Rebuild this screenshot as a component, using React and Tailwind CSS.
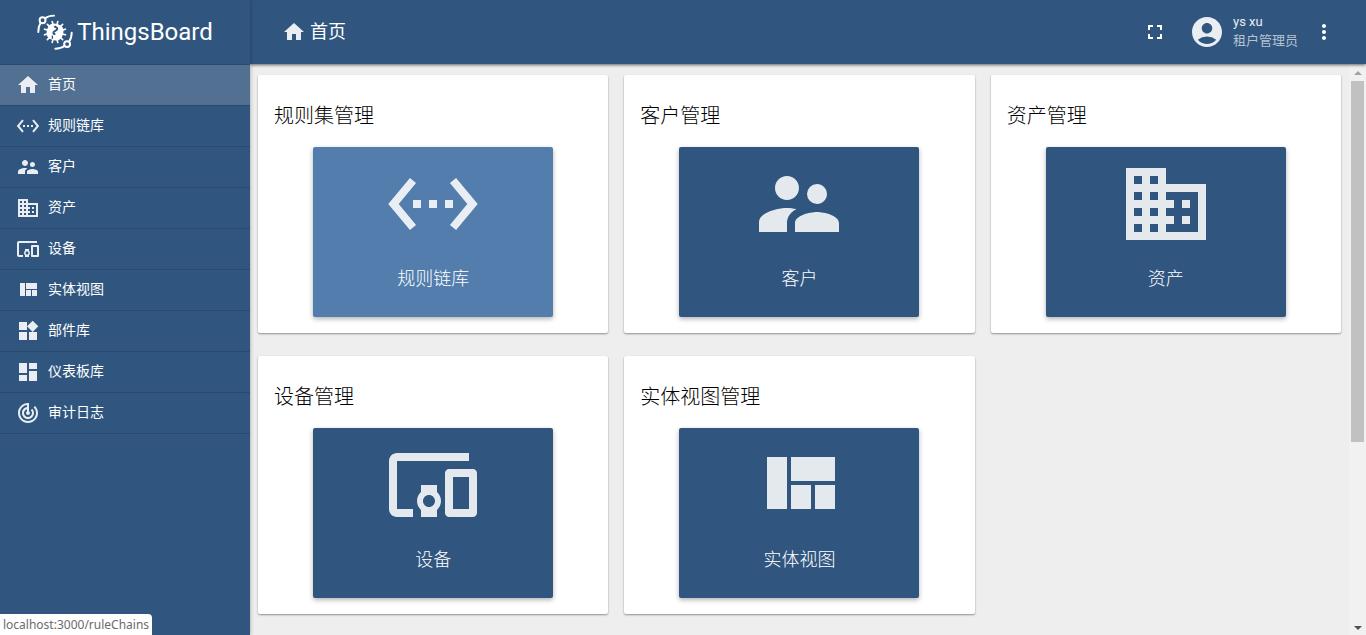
import React, { useState } from 'react';
import {
  MdAccountCircle,
  MdDashboard,
  MdDevicesOther,
  MdDomain,
  MdFullscreen,
  MdHome,
  MdMoreVert,
  MdSettingsEthernet,
  MdSupervisorAccount,
  MdTrackChanges,
  MdWidgets,
} from 'react-icons/md';

const ViewQuiltIcon = ({ className }) => (
  <svg viewBox="0 0 24 24" fill="currentColor" className={className} aria-hidden="true">
    <path d="M10 18h5v-6h-5v6zm-6 0h5V5H4v13zm12 0h5v-6h-5v6zM10 5v6h11V5H10z" />
  </svg>
);

const menuItems = [
  { label: '首页', path: '/home', icon: MdHome },
  { label: '规则链库', path: '/ruleChains', icon: MdSettingsEthernet },
  { label: '客户', path: '/customers', icon: MdSupervisorAccount },
  { label: '资产', path: '/assets', icon: MdDomain },
  { label: '设备', path: '/devices', icon: MdDevicesOther },
  { label: '实体视图', path: '/entityViews', icon: ViewQuiltIcon },
  { label: '部件库', path: '/widgets-bundles', icon: MdWidgets },
  { label: '仪表板库', path: '/dashboards', icon: MdDashboard },
  { label: '审计日志', path: '/auditLogs', icon: MdTrackChanges },
];

const sections = [
  { title: '规则集管理', label: '规则链库', path: '/ruleChains', icon: MdSettingsEthernet },
  { title: '客户管理', label: '客户', path: '/customers', icon: MdSupervisorAccount },
  { title: '资产管理', label: '资产', path: '/assets', icon: MdDomain },
  { title: '设备管理', label: '设备', path: '/devices', icon: MdDevicesOther },
  { title: '实体视图管理', label: '实体视图', path: '/entityViews', icon: ViewQuiltIcon },
];

const teeth = [0, 30, 60, 90, 120, 150, 180, 210, 240, 270, 300, 330];

const Logo = () => (
  <a href="#/home" className="flex items-center justify-center h-16 gap-1 text-white">
    <svg viewBox="0 0 110 110" className="w-9 h-9 shrink-0" fill="none" stroke="currentColor" aria-hidden="true">
      <g strokeWidth="6" strokeLinecap="round">
        <circle cx="17" cy="19" r="9" />
        <path d="M25 13C33 7 42 5 52 5" />
        <path d="M11 27C6 35 4 44 4 55" />
        <circle cx="92" cy="92" r="9" />
        <path d="M98 84c6-8 8-17 8-27" />
        <path d="M84 98c-8 6-17 8-28 8" />
      </g>
      {teeth.map((angle) => (
        <path key={angle} d="M55 33V22" strokeWidth="5" strokeLinecap="round" transform={`rotate(${angle + 15} 55 55)`} />
      ))}
      <rect x="30" y="30" width="50" height="50" rx="20" fill="currentColor" stroke="none" transform="rotate(15 55 55)" />
      <path
        d="M53 37c3 4 10 3 9 9-1 5-12 6-12 11 0 3 3 4 6 4"
        className="stroke-[#305680]"
        strokeWidth="6"
      />
      <path d="M47 66v10" className="stroke-[#305680]" strokeWidth="4" />
    </svg>
    <span className="text-2xl">ThingsBoard</span>
  </a>
);

const Sidebar = () => (
  <aside className="relative z-20 w-[250px] shrink-0 bg-[#305680] shadow-[0_0_4px_rgba(0,0,0,0.35)]">
    <Logo />
    <nav className="border-t border-[#284a6f]">
      <ul>
        {menuItems.map(({ label, path, icon: Icon }) => (
          <li key={path} className="border-b border-[#284a6f]">
            <a
              href={`#${path}`}
              className={`flex items-center h-10 px-4 gap-2 text-sm text-white hover:bg-[#527091] ${
                path === '/home' ? 'bg-[#527091]' : ''
              }`}
            >
              <Icon className="w-6 h-6 text-[#eaeef2]" />
              <span className="pb-0.5">{label}</span>
            </a>
          </li>
        ))}
      </ul>
    </nav>
  </aside>
);

const Toolbar = () => (
  <header className="relative z-10 flex items-center justify-between h-16 pl-8 pr-[30px] bg-[#305680] text-[#eaeef2] shadow-[0_1px_3px_rgba(0,0,0,0.6)]">
    <h1 className="flex items-center gap-1 text-lg text-white">
      <MdHome className="w-6 h-6 text-[#eaeef2]" />
      首页
    </h1>
    <div className="flex items-center">
      <button type="button" aria-label="全屏" className="mr-[22px]">
        <MdFullscreen className="w-6 h-6 text-white" />
      </button>
      <MdAccountCircle className="w-9 h-9 mr-2" />
      <div className="mr-3.5 pb-0.5 text-[13px] leading-[19px]">
        <div>ys xu</div>
        <div className="text-[#b4c2d1]">租户管理员</div>
      </div>
      <button type="button" aria-label="更多">
        <MdMoreVert className="w-6 h-6 text-white" />
      </button>
    </div>
  </header>
);

const SectionCard = ({ title, label, path, icon: Icon, active, onHover }) => (
  <section className="p-4 pt-[25px] bg-white rounded-xs shadow-[0_1px_2px_rgba(0,0,0,0.4)]">
    <h2 className="text-xl leading-8 font-light text-black">{title}</h2>
    <a
      href={`#${path}`}
      onMouseEnter={() => onHover(path)}
      className={`flex flex-col items-center w-60 h-[170px] mx-auto mt-[15px] pt-[9px] rounded-xs text-white shadow-[0_2px_5px_rgba(0,0,0,0.3)] ${
        active ? 'bg-[#527dad]' : 'bg-[#305680]'
      }`}
    >
      <Icon className="w-24 h-24 opacity-[0.87]" />
      <span className="mt-[13px] text-lg font-light">{label}</span>
    </a>
  </section>
);

const Scrollbar = () => (
  <div className="flex flex-col items-center justify-between w-[17px] shrink-0 py-[5px] bg-[#f1f1f1]" aria-hidden="true">
    <svg viewBox="0 0 8 4" className="w-2 h-1 mt-0.5 fill-[#a3a3a3]">
      <path d="M0 4l4-4 4 4z" />
    </svg>
    <div className="flex-1 w-full px-[2px] py-[6px]">
      <div className="h-[67%] bg-[#c1c1c1]" />
    </div>
    <svg viewBox="0 0 8 4" className="w-2 h-1 fill-[#505050]">
      <path d="M0 0l4 4 4-4z" />
    </svg>
  </div>
);

const App = () => {
  const [hovered, setHovered] = useState('/ruleChains');

  return (
    <div className="relative flex h-screen overflow-hidden bg-[#eeeeee] font-[Roboto,'Noto_Sans_CJK_SC',sans-serif]">
      <Sidebar />
      <div className="flex flex-col flex-1 min-w-0">
        <Toolbar />
        <div className="flex flex-1 min-h-0">
          <main className="flex-1 min-w-0 px-2 pt-[11px] overflow-hidden">
            <div className="grid grid-cols-3 gap-x-4 gap-y-[23px]">
              {sections.map((section) => (
                <SectionCard
                  key={section.path}
                  {...section}
                  active={section.path === hovered}
                  onHover={setHovered}
                />
              ))}
            </div>
          </main>
          <Scrollbar />
        </div>
      </div>

      {/* Link target preview */}
      <div className="absolute bottom-0 left-0 z-30 px-[3px] rounded-tr-sm bg-white text-xs leading-[21px] text-[#6b6b6b] font-['Noto_Sans',sans-serif]">
        localhost:3000{hovered}
      </div>
    </div>
  );
};

export default App;
